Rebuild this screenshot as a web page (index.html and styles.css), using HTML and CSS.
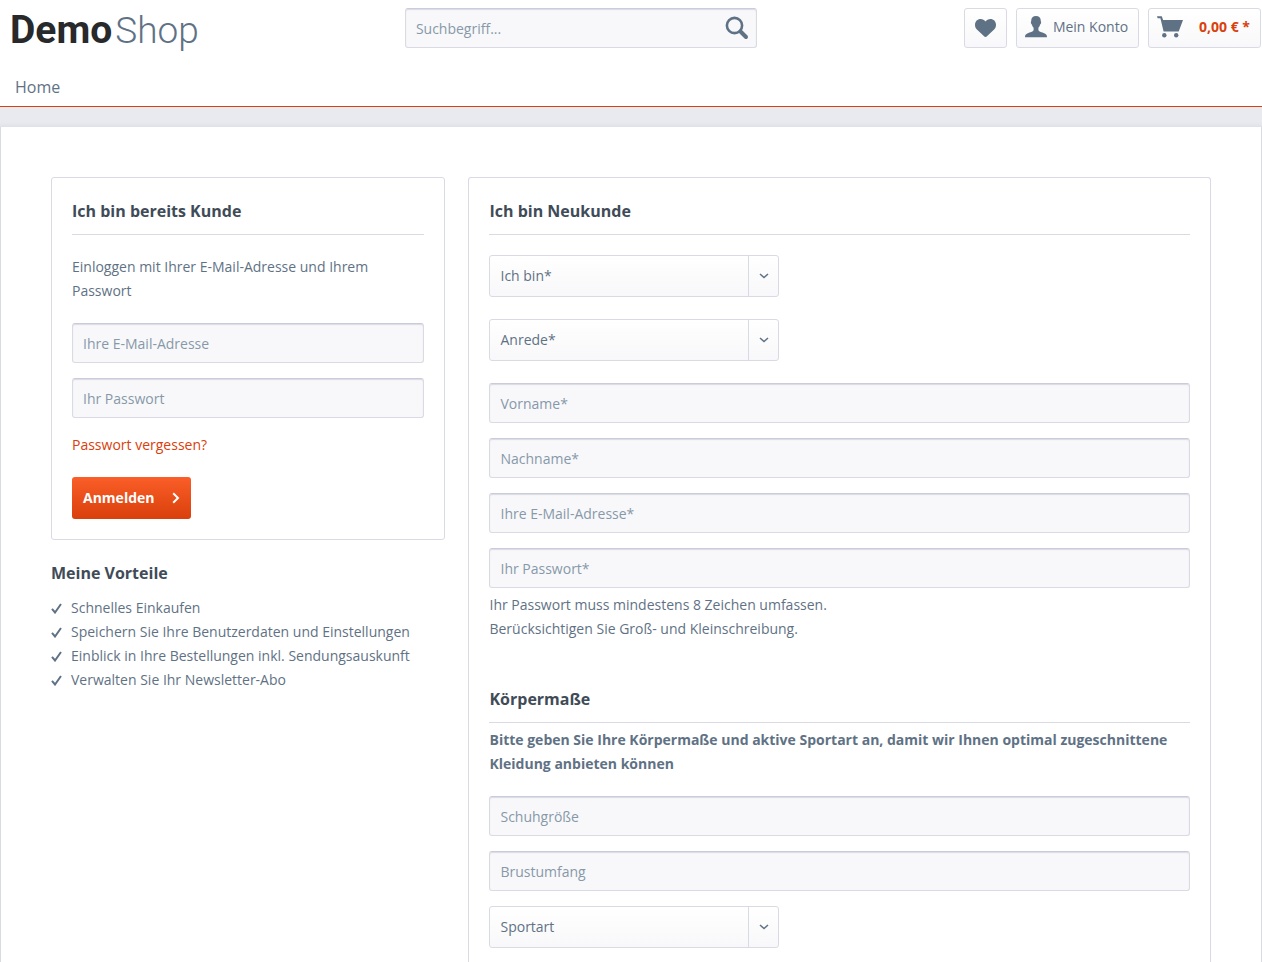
FILE: index.html
```html
<!DOCTYPE html>
<html lang="de">
<head>
<meta charset="utf-8">
<title>DemoShop – Anmelden</title>
<link rel="stylesheet" href="styles.css">
</head>
<body>
<header class="header">
  <div class="header-bar">
    <a class="logo" href="#"><span class="logo-bold">Demo</span><span class="logo-light">Shop</span></a>
    <form class="search">
      <input class="field" type="search" placeholder="Suchbegriff..." aria-label="Suchbegriff">
      <button class="search-button" type="button" aria-label="Suchen">
        <svg width="24" height="24" viewBox="0 0 24 24" fill="none" stroke="currentColor"><circle cx="9.5" cy="9.5" r="7.6" stroke-width="2.6"/><path d="M15.5 15.5l5.5 5.5" stroke-width="4" stroke-linecap="round"/></svg>
      </button>
    </form>
    <nav class="shop-actions" aria-label="Konto und Warenkorb">
      <button class="action action-heart" type="button" aria-label="Merkzettel">
        <svg width="21" height="18" viewBox="0 0 21 18" fill="currentColor"><path d="M10.500 18C9.800 18 9.400 17.600 8.800 17.100L1.900 10.600C.6 9.300 0 7.600 0 5.700 0 2.400 2.500 0 5.600 0 7.600 0 9.400.9 10.500 2.600 11.600.9 13.400 0 15.400 0 18.500 0 21 2.400 21 5.700 21 7.600 20.400 9.300 19.100 10.600L12.200 17.100C11.600 17.600 11.200 18 10.500 18z"/></svg>
      </button>
      <button class="action" type="button">
        <svg width="22" height="22" viewBox="0 0 22 22" fill="currentColor"><path d="M11 0C8 0 6.200 1.900 6.200 4.800c0 1-.5 1.200-.3 2.200.2.900.8.900 1 1.700.3 1.300 1 2.300 1.700 3v2.500C8 15.700 5 16.300 2.800 17.200.7 18 0 18.800 0 21.200h22c0-2.400-.7-3.200-2.800-4C17 16.300 14 15.700 13.400 14.200v-2.500c.7-.7 1.400-1.700 1.700-3 .2-.8.800-.8 1-1.700.2-1-.3-1.200-.3-2.200C15.800 1.900 14 0 11 0z"/></svg>
        <span>Mein Konto</span>
      </button>
      <button class="action action-cart" type="button" aria-label="Warenkorb 0,00 €">
        <svg width="26" height="22" viewBox="0 0 26 22" fill="currentColor"><path d="M0 .3h4.800l1.300 3.700H26l-4.300 11.400H6.600L3.400 2.300H.6z"/><circle cx="7.300" cy="19.300" r="2.200"/><circle cx="19.200" cy="19.300" r="2.200"/></svg>
        <span class="amount">0,00&nbsp;€&nbsp;*</span>
      </button>
    </nav>
  </div>
  <nav class="main-nav"><a href="#">Home</a></nav>
</header>

<main class="content">
  <div class="customer-column">
    <form class="card">
      <h2 class="title">Ich bin bereits Kunde</h2>
      <p class="intro">Einloggen mit Ihrer E-Mail-Adresse und Ihrem Passwort</p>
      <div class="fields">
        <input class="field" type="email" placeholder="Ihre E-Mail-Adresse" aria-label="Ihre E-Mail-Adresse">
        <input class="field" type="password" placeholder="Ihr Passwort" aria-label="Ihr Passwort">
      </div>
      <a class="forgot" href="#">Passwort vergessen?</a>
      <button class="submit" type="button">Anmelden
        <svg width="8" height="12" viewBox="0 0 8 12" fill="none" stroke="currentColor" stroke-width="2"><path d="M1.200 1.200L6 6l-4.800 4.800"/></svg>
      </button>
    </form>
    <section class="benefits">
      <h2 class="benefits-title">Meine Vorteile</h2>
      <ul class="benefit-list">
        <li><svg class="check" viewBox="0 0 11 11"><path d="M1 5.800l3 3.700L10 1"/></svg>Schnelles Einkaufen</li>
        <li><svg class="check" viewBox="0 0 11 11"><path d="M1 5.800l3 3.700L10 1"/></svg>Speichern Sie Ihre Benutzerdaten und Einstellungen</li>
        <li><svg class="check" viewBox="0 0 11 11"><path d="M1 5.800l3 3.700L10 1"/></svg>Einblick in Ihre Bestellungen inkl. Sendungsauskunft</li>
        <li><svg class="check" viewBox="0 0 11 11"><path d="M1 5.800l3 3.700L10 1"/></svg>Verwalten Sie Ihr Newsletter-Abo</li>
      </ul>
    </section>
  </div>

  <form class="card register">
    <h2 class="title">Ich bin Neukunde</h2>
    <div class="selects">
      <div class="select"><select aria-label="Ich bin"><option>Ich bin*</option><option>Privatkunde</option><option>Firma</option></select><span class="select-arrow"><svg width="10" height="6" viewBox="0 0 10 6"><path d="M1 1l4 3.600L9 1"/></svg></span></div>
      <div class="select"><select aria-label="Anrede"><option>Anrede*</option><option>Frau</option><option>Herr</option></select><span class="select-arrow"><svg width="10" height="6" viewBox="0 0 10 6"><path d="M1 1l4 3.600L9 1"/></svg></span></div>
    </div>
    <div class="fields">
      <input class="field" type="text" placeholder="Vorname*" aria-label="Vorname">
      <input class="field" type="text" placeholder="Nachname*" aria-label="Nachname">
      <input class="field" type="email" placeholder="Ihre E-Mail-Adresse*" aria-label="Ihre E-Mail-Adresse">
      <input class="field" type="password" placeholder="Ihr Passwort*" aria-label="Ihr neues Passwort">
    </div>
    <p class="hint">Ihr Passwort muss mindestens 8 Zeichen umfassen.<br>Berücksichtigen Sie Groß- und Kleinschreibung.</p>
    <h2 class="title">Körpermaße</h2>
    <p class="measure-note">Bitte geben Sie Ihre Körpermaße und aktive Sportart an, damit wir Ihnen optimal zugeschnittene Kleidung anbieten können</p>
    <div class="fields">
      <input class="field" type="text" placeholder="Schuhgröße" aria-label="Schuhgröße">
      <input class="field" type="text" placeholder="Brustumfang" aria-label="Brustumfang">
      <div class="select"><select aria-label="Sportart"><option>Sportart</option><option>Laufen</option><option>Radfahren</option></select><span class="select-arrow"><svg width="10" height="6" viewBox="0 0 10 6"><path d="M1 1l4 3.600L9 1"/></svg></span></div>
    </div>
  </form>
</main>
</body>
</html>
```

FILE: styles.css
```css
* {
  box-sizing: border-box;
}

body {
  display: flex;
  flex-direction: column;
  min-height: 100vh;
  margin: 0;
  background: #e9eaef;
  color: #5f7285;
  font: 14px/24px "Open Sans", sans-serif;
}

h2,
p,
ul {
  margin: 0;
  padding: 0;
}

a {
  color: inherit;
  text-decoration: none;
}

button,
input,
select {
  font: inherit;
  color: inherit;
}

svg {
  flex: none;
}

/* Header */
.header {
  background: #fff;
  border-bottom: 1px solid #d9400b;
}

.header-bar {
  display: grid;
  grid-template-columns: 32% 28% 1fr;
  align-items: start;
  padding: 8px 1px 0 2px;
}

.logo {
  display: flex;
  align-items: baseline;
  gap: 3px;
  height: 44px;
  padding-left: 8px;
  font: 39px/44px Roboto, sans-serif;
}

.logo-bold {
  color: #27292b;
  font-weight: 700;
}

.logo-light {
  font-size: 37px;
  font-weight: 300;
}

.search {
  position: relative;
}

.search .field {
  padding-right: 44px;
}

.search-button {
  position: absolute;
  top: 8px;
  right: 8px;
  display: flex;
  padding: 0;
  border: 0;
  background: none;
}

.shop-actions {
  display: flex;
  justify-content: flex-end;
  gap: 9px;
}

.action {
  display: flex;
  align-items: center;
  gap: 6px;
  height: 40px;
  padding: 0 10px 2px 8px;
  border: 1px solid #dadae5;
  border-radius: 3px;
  background: linear-gradient(#fff, #f8f8fa);
}

.action-heart {
  padding: 0 10px;
}

.action-cart {
  gap: 16px;
}

.amount {
  color: #d9400b;
  font-weight: 700;
}

.main-nav {
  padding: 16px 15px 0;
  font-size: 16px;
  line-height: 38px;
}

/* Page content */
.content {
  flex: 1;
  display: grid;
  grid-template-columns: 34fr 64fr;
  column-gap: 23px;
  margin-top: 20px;
  padding: 50px 50px 0;
  border: 1px solid #dadae5;
  border-bottom: 0;
  border-top: 0;
  background: #fff;
  box-shadow: 0 0 4px 1px #dadae5;
}

.card {
  padding: 20px;
  border: 1px solid #dadae5;
  border-radius: 3px;
}

.title {
  padding-bottom: 10px;
  border-bottom: 1px solid #dadae5;
  color: #3f4c58;
  font-size: 16px;
  font-weight: 700;
  line-height: 26px;
}

.intro {
  margin: 20px 0;
}

.fields {
  display: grid;
  gap: 15px;
}

.field {
  display: block;
  width: 100%;
  height: 40px;
  padding: 0 10px;
  border: 1px solid #dadae5;
  border-top-color: #cbcbdb;
  border-radius: 3px;
  outline: 0;
  background: #f8f8fa;
  box-shadow: inset 0 1px 1px #dadae5;
  appearance: none;
}

.field::placeholder {
  color: #8798a9;
  opacity: 1;
}

.forgot {
  display: block;
  margin: 15px 0 20px;
  color: #d9400b;
}

.submit {
  display: flex;
  align-items: center;
  gap: 18px;
  height: 42px;
  padding: 0 11px;
  border: 0;
  border-radius: 3px;
  background: linear-gradient(#fb5e28, #d9400b);
  color: #fff;
  font-weight: 700;
}

.benefits {
  padding-top: 20px;
}

.benefits-title {
  margin-bottom: 10px;
  color: #3f4c58;
  font-size: 16px;
  font-weight: 700;
  line-height: 26px;
}

.benefit-list {
  list-style: none;
}

.benefit-list li {
  display: flex;
  align-items: center;
  gap: 9px;
}

.check {
  width: 11px;
  height: 11px;
  fill: none;
  stroke: currentColor;
  stroke-width: 2;
}

/* Registration */
.register {
  padding-bottom: 14px;
  border-bottom: 0;
  border-radius: 3px 3px 0 0;
}

.selects {
  display: grid;
  gap: 22px;
  margin: 20px 0 22px;
}

.select {
  position: relative;
  width: 290px;
  max-width: 100%;
}

.select select {
  display: block;
  width: 100%;
  height: 42px;
  padding: 0 40px 0 10px;
  border: 1px solid #dadae5;
  border-radius: 3px;
  background: linear-gradient(#fff, #f8f8fa);
  appearance: none;
}

.select-arrow {
  position: absolute;
  top: 1px;
  right: 1px;
  bottom: 1px;
  display: grid;
  place-items: center;
  width: 30px;
  border-left: 1px solid #dadae5;
  pointer-events: none;
}

.select-arrow svg {
  fill: none;
  stroke: currentColor;
  stroke-width: 1.5;
}

.hint {
  margin: 5px 0 45px;
}

.measure-note {
  margin: 5px 0 20px;
  font-weight: 700;
}
```
